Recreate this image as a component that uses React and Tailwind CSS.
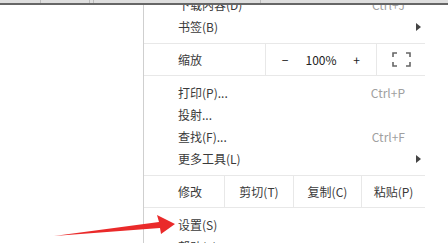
const font = { fontFamily: '"Microsoft YaHei", "Noto Sans CJK SC", "Liberation Sans", sans-serif' };

function Row({ label, shortcut, sub }) {
  return (
    <div className="flex h-[22px] items-center pl-[34px] pr-[20px]">
      <span className="flex-1">{label}</span>
      {shortcut && <span className="text-[#a0a0a0]">{shortcut}</span>}
      {sub && (
        <svg className="-mr-[16px]" width="5" height="8" viewBox="0 0 5 8">
          <path d="M0 0L5 4L0 8Z" fill="#444" />
        </svg>
      )}
    </div>
  );
}

function Sep() {
  return <div className="h-[5px]" />;
}

export default function App() {
  return (
    <div
      className="relative h-[243px] w-[448px] overflow-hidden bg-white text-[12px] text-[#3a3a3a]"
      style={font}
    >
      <div className="flex h-[5px] border-b-2 border-[#666] bg-[#dedede]">
        <div className="w-[41px] border-r border-[#bbb]" />
        <div className="w-[49px] border-r border-[#bbb]" />
        <div className="w-[4px] border-r border-[#bbb]" />
        <div className="w-[167px] border-r border-[#bbb]" />
      </div>

      <div className="flex h-[238px]">
        <div className="w-[143px]" />
        <div className="flex-1 overflow-hidden border-l border-[#cfcfcf]">
          <div className="w-[281px]">
            <div className="-mt-[11px]">
              <Row label="下载内容(D)" shortcut="Ctrl+J" />
            </div>
            <Row label="书签(B)" sub />
            <Sep />

            <div className="flex h-[33px] items-center border-y border-[#e8e8e8]">
              <div className="flex h-full w-[121px] items-center pl-[34px]">缩放</div>
              <div className="flex h-full w-[111px] items-center border-l border-[#e8e8e8] text-[#222]">
                <span className="w-[38px] text-center">−</span>
                <span className="w-[34px] text-center">100%</span>
                <span className="w-[37px] text-center">+</span>
              </div>
              <div className="flex h-full flex-1 items-center justify-center border-l border-[#e8e8e8]">
                <svg width="19" height="15" viewBox="0 0 19 15" fill="none" stroke="#666" strokeWidth="1.6">
                  <path d="M1 5V1h4M14 1h4v4M18 10v4h-4M5 14H1v-4" />
                </svg>
              </div>
            </div>

            <div className="h-[6px]" />
            <Row label="打印(P)..." shortcut="Ctrl+P" />
            <Row label="投射..." />
            <Row label="查找(F)..." shortcut="Ctrl+F" />
            <Row label="更多工具(L)" sub />
            <Sep />

            <div className="flex h-[33px] items-center border-y border-[#e8e8e8]">
              <div className="flex h-full w-[80px] items-center pl-[34px]">修改</div>
              <div className="flex h-full w-[69px] items-center justify-center border-l border-[#e8e8e8]">剪切(T)</div>
              <div className="flex h-full w-[68px] items-center justify-center border-l border-[#e8e8e8]">复制(C)</div>
              <div className="flex h-full flex-1 items-center justify-center border-l border-[#e8e8e8]">粘贴(P)</div>
            </div>

            <div className="h-[6px]" />
            <Row label="设置(S)" />
            <Row label="帮助(E)" sub />
          </div>
        </div>
      </div>

      <svg className="absolute left-0 top-0" width="448" height="243" viewBox="0 0 448 243">
        <polygon
          points="54,236 159,222 157,215 175,224 161,234 160,228"
          fill="#ea2a2a"
        />
      </svg>
    </div>
  );
}
